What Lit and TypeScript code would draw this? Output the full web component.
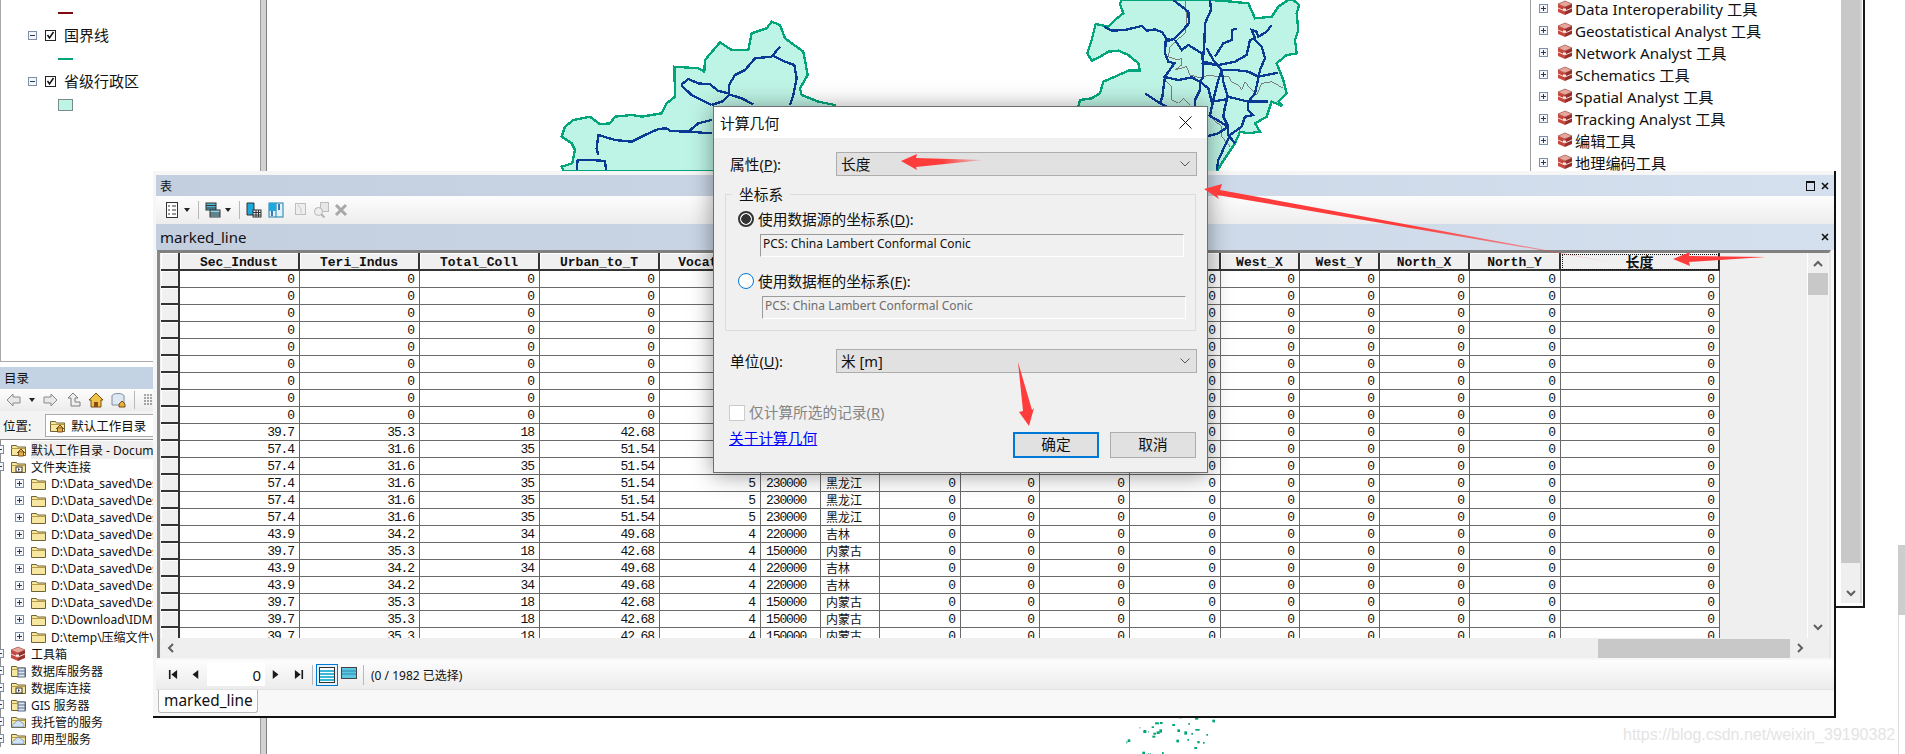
import {LitElement, html, css, svg} from 'lit';
import {customElement} from 'lit/decorators.js';

// map traces, written in the 3x coordinates they were read at
const RIGHT_FILL =
  'M140,0 135,12 145,40 120,60 100,80 62,72 50,120 37,160 50,182 75,170 100,155 130,152 160,165 190,190 195,212 160,212 120,230 85,245 75,280 50,295 15,300 10,320 10,525 420,525 440,490 480,430 495,395 520,400 555,395 540,370 575,350 590,305 622,318 610,305 635,280 625,240 605,190 635,165 665,160 660,120 670,90 665,40 672,15 655,0 640,0 610,20 590,50 540,55 520,10 470,5 408,0 Z';
const RIGHT_ROADS = [
  'M88,80 110,92 150,90 200,78 215,92 240,88 262,97 275,118 295,120',
  'M295,0 340,35 342,70 300,115 272,125 270,160 280,185 298,190 270,230 262,290 255,310',
  'M300,120 320,150 340,135 380,160 385,190 430,195',
  'M405,0 408,30 390,70 388,130 383,190 385,230 375,245 375,270 360,300 360,320',
  'M395,145 415,180 440,210 430,240 415,300 405,345',
  'M420,170 445,130 470,120 472,90 485,85',
  'M385,185 430,195 480,185 515,165 525,120 540,115 530,90 545,95 550,110 575,95 590,75',
  'M540,120 560,140 570,175 555,210 550,235 540,280 520,305 520,330 535,345 510,350 500,380 465,405 430,480 425,510',
  'M440,210 480,210 520,215 550,230 610,218',
  'M440,210 445,245 458,290 450,320 445,350 460,380 460,405 480,430',
  'M265,230 310,240 350,232 375,245 400,265 410,305 455,298',
  'M458,290 500,300 520,305 580,305',
  'M210,280 255,310 275,320',
  'M400,345 435,365 455,378',
  'M400,408 430,400 460,380',
];
const RIGHT_GREY = [
  'M330,0 335,60 330,100 300,125 285,140 280,170 310,180 320,175 320,195 300,210 335,200 345,225 380,235 400,225 430,230 460,228 470,245 490,255 500,270 510,245 525,265 545,285 560,250 590,245 625,265',
  'M270,240 290,260 290,300 310,310 325,295 345,315',
  'M405,350 440,380 440,410 465,440',
];
const LEFT_FILL =
  'M25,465 20,455 52,445 60,405 50,385 20,365 30,335 55,315 105,305 135,328 165,325 180,305 230,300 260,305 320,295 335,265 360,245 358,155 430,160 448,170 450,135 495,82 530,105 580,105 590,55 635,40 650,20 675,30 690,70 745,110 758,180 735,220 740,240 790,260 840,270 840,470 25,470 Z';
const LEFT_ROADS = [
  'M65,465 68,435 110,435 150,438 153,465',
  'M130,420 125,400 130,360 180,375 230,380 270,360 310,342 335,340 345,348 400,350 470,355',
  'M400,350 430,325 470,315',
  'M470,270 505,258 522,240 522,210 540,180 570,165 600,130 650,125 675,95',
  'M650,120 690,140 718,150 725,190 715,240 705,270',
  'M522,238 560,250 595,268',
  'M378,210 400,192 430,205 465,208 490,228 522,235',
  'M378,210 410,240 470,270',
];
const DOTS = [
  [165, 67, 12, 6], [180, 66, 8, 6], [155, 79, 7, 5], [118, 82, 3, 3], [130, 90, 9, 9], [144, 94, 3, 3],
  [160, 98, 8, 6], [170, 94, 9, 8], [178, 88, 8, 10], [157, 107, 9, 6], [217, 72, 8, 6], [232, 88, 8, 8],
  [253, 94, 8, 10], [265, 69, 5, 5], [238, 52, 8, 3], [285, 52, 10, 7], [337, 59, 8, 8], [286, 87, 13, 5],
  [274, 99, 5, 5], [319, 102, 5, 5], [229, 119, 8, 8], [262, 117, 5, 5], [292, 123, 7, 7], [309, 126, 5, 5],
  [283, 141, 8, 6], [83, 118, 8, 8], [79, 124, 3, 6], [127, 155, 8, 8], [186, 156, 5, 6], [144, 160, 3, 3],
  [150, 160, 3, 3],
];

const ZEROS = new Array(9).fill('0');
const SEC = [...ZEROS, '39.7', '57.4', '57.4', '57.4', '57.4', '57.4', '43.9', '39.7', '43.9', '43.9', '39.7', '39.7', '39.7'];
const rowOf = (a: string, b: string, c: string, d: string) => ({a, b, c, d});
const KINDS: Record<string, ReturnType<typeof rowOf>> = {
  '0': rowOf('0', '0', '0', '0'),
  '39.7': rowOf('35.3', '18', '42.68', '4'),
  '57.4': rowOf('31.6', '35', '51.54', '5'),
  '43.9': rowOf('34.2', '34', '49.68', '4'),
};
const PLACE: Record<string, string[]> = {
  '0': ['0', ''],
  '39.7': ['150000', '内蒙古'],
  '57.4': ['230000', '黑龙江'],
  '43.9': ['220000', '吉林'],
};
const HEADS = [
  'Sec_Indust', 'Teri_Indus', 'Total_Coll', 'Urban_to_T', 'Vocation', 'Code', 'Name',
  'East_X', 'East_Y', 'South_X', 'South_Y', 'West_X', 'West_Y', 'North_X', 'North_Y',
];
const TOOLS = [
  'Data Interoperability 工具', 'Geostatistical Analyst 工具', 'Network Analyst 工具', 'Schematics 工具',
  'Spatial Analyst 工具', 'Tracking Analyst 工具', '编辑工具', '地理编码工具',
];
const FOLDERS = [
  ...new Array(8).fill('D:\\Data_saved\\Desktop\\data'),
  'D:\\Download\\IDM\\Compressed',
  'D:\\temp\\压缩文件\\shapefile',
];

const plusBox = svg`<svg class="ico" width="9" height="9" viewBox="0 0 9 9"><rect x=".5" y=".5" width="8" height="8" fill="#f4f6fa" stroke="#7f8ea8"/><path d="M2 4.5h5M4.5 2v5" stroke="#2b3a55"/></svg>`;
const minusBox = svg`<svg class="ico" width="9" height="9" viewBox="0 0 9 9"><rect x=".5" y=".5" width="8" height="8" fill="#f4f6fa" stroke="#7f8ea8"/><path d="M2 4.5h5" stroke="#2b3a55"/></svg>`;
const toolbox = svg`<svg class="ico" width="17" height="16" viewBox="0 0 17 16"><path d="M8 1l7 3-7 3-7-3z" fill="#e9a79b" stroke="#8a3a34" stroke-width=".6"/><path d="M1 4l7 3v8l-7-3z" fill="#c8483f"/><path d="M15 4l-7 3v8l7-3z" fill="#96302c"/><path d="M1 8l7 3 7-3" fill="none" stroke="#f3d6cf"/><rect x="6" y="8.5" width="3" height="2" fill="#eee"/></svg>`;
const folder = (extra: unknown = '') => svg`<svg class="ico" width="17" height="15" viewBox="0 0 17 15"><path d="M1.5 3.5h5l1 1.5h8v8.5h-14z" fill="#f7e6a0" stroke="#6f6234"/><path d="M1.5 6.5h14" stroke="#b69a45"/>${extra}</svg>`;
const house = svg`<path d="M7 11l4-4 4 4M8.5 10v4h5v-4z" fill="#e3b33e" stroke="#7c4b1c"/>`;
const cloud = svg`<path d="M3 13a2.500 2.500 0 0 1 2-4 3.500 3.500 0 0 1 6.500-.5 2.500 2.500 0 0 1 1.500 4.500z" fill="#cfe2f6" stroke="#6c8db3" stroke-width=".7"/>`;
const server = svg`<rect x="8" y="5" width="7" height="9" fill="#dbe6f2" stroke="#5a6c85"/><path d="M8 8h7M8 11h7" stroke="#5a6c85"/>`;
const link = svg`<rect x="6" y="8" width="6" height="5" fill="#fff" stroke="#333"/><path d="M8 9l2 1.500-2 1.500z" fill="#2a2a2a"/>`;
const tbGlyph = (body: unknown, w = 16, h = 16) =>
  svg`<svg class="ico" width=${w} height=${h} viewBox="0 0 16 16">${body}</svg>`;
const arrowDown = svg`<svg class="ico" width="6" height="4" viewBox="0 0 6 4"><path d="M0 0h6L3 4z" fill="#222"/></svg>`;
const navIcon = (d: string) => svg`<svg class="ico nav-ico" width="10" height="9" viewBox="0 0 10 11"><path d=${d} fill="#1a1a1a"/></svg>`;
const chevron = (d: string) => svg`<svg class="ico" width="12" height="12" viewBox="0 0 12 12"><path d=${d} fill="none" stroke="#606060" stroke-width="2"/></svg>`;
const selectChevron = svg`<svg class="ico" width="10" height="6" viewBox="0 0 10 6"><path d="M.5.500l4.500 4.500 4.500-4.500" fill="none" stroke="#555"/></svg>`;
const closeX = svg`<svg class="ico" width="10" height="10" viewBox="0 0 10 10"><path d="M2 2l6 6M8 2l-6 6" stroke="#111" stroke-width="1.600"/></svg>`;

@customElement('app-root')
export class AppRoot extends LitElement {
  static styles = css`
    :host {
      display: block;
      position: relative;
      width: 1905px;
      height: 754px;
      overflow: hidden;
      background: #fff;
      font-family: "Noto Sans", "Noto Sans CJK SC", sans-serif;
      color: #111;
    }

    * {
      box-sizing: border-box;
    }

    .ico {
      display: block;
      flex: none;
    }

    .map,
    .arrows {
      position: absolute;
      left: 0;
      top: 0;
    }

    .arrows {
      pointer-events: none;
    }

    /* layer list */
    .toc {
      position: absolute;
      left: 0;
      top: 0;
      width: 260px;
      height: 362px;
      padding-top: 1px;
      border-left: 1px solid #a8a8a8;
      background: #fff;
      font-size: 15px;
    }

    .toc-row {
      display: flex;
      align-items: center;
      height: 23px;
      padding-left: 27px;
    }

    .toc-row span {
      margin-top: -2px;
    }

    .toc-check {
      margin-left: 8px;
      margin-right: 8px;
    }

    .legend-line {
      width: 15px;
      height: 2px;
      margin-left: 30px;
    }

    .legend-line.red {
      background: #7d0b14;
    }

    .legend-line.green {
      background: #00a57a;
    }

    .legend-fill {
      width: 15px;
      height: 12px;
      margin-left: 30px;
      background: #bef4e5;
      border: 1px solid #7c8c88;
    }

    .splitter {
      position: absolute;
      left: 260px;
      top: 0;
      width: 7px;
      height: 754px;
      background: #d2d2d2;
      border-left: 1px solid #9a9a9a;
      border-right: 1px solid #808080;
    }

    /* catalog */
    .catalog {
      position: absolute;
      left: 0;
      top: 361px;
      width: 258px;
      height: 393px;
      background: #fff;
      border-top: 1px solid #aaa;
      overflow: hidden;
      font-size: 12px;
    }

    .cat-title {
      margin-top: 5px;
      height: 22px;
      padding-left: 4px;
      line-height: 23px;
      font-size: 12.500px;
      background: #c4d3e4;
    }

    .cat-tools {
      display: flex;
      align-items: center;
      gap: 7px;
      height: 22px;
      padding-left: 6px;
      background: linear-gradient(#fdfdfd, #ececec);
    }

    .tool-sep {
      width: 1px;
      height: 18px;
      background: #b8b8b8;
    }

    .cat-where {
      display: flex;
      align-items: center;
      height: 28px;
      font-size: 12.500px;
      padding-left: 3px;
      background: #f3f3f3;
    }

    .where-box {
      display: flex;
      align-items: center;
      gap: 5px;
      width: 204px;
      height: 23px;
      margin-left: 14px;
      padding-left: 3px;
      background: #fff;
      border: 1px solid #ababab;
    }

    .cat-tree {
      padding-top: 1px;
      border-top: 1px solid #8f8f8f;
      border-left: 1px solid #8f8f8f;
    }

    .tree-row {
      display: flex;
      align-items: center;
      height: 17px;
      white-space: nowrap;
    }

    .tree-row .exp {
      margin-left: -6px;
      margin-right: 6px;
    }

    .tree-row .text {
      margin-left: 4px;
      padding-right: 4px;
    }

    .tree-row.sel .text {
      background: #efefef;
    }

    .tree-row.child {
      padding-left: 14px;
    }

    .tree-row.child .ico:first-child {
      margin-right: 6px;
    }

    /* toolbox dock behind the table */
    .toolbox {
      position: absolute;
      left: 1530px;
      top: 0;
      width: 335px;
      height: 608px;
      background: #fff;
      border-left: 1px solid #a0a0a0;
      border-right: 2px solid #1a1a1a;
      border-bottom: 2px solid #1a1a1a;
      overflow: hidden;
      font-size: 15.200px;
    }

    .tool-list {
      margin-top: -3px;
    }

    .tool-row {
      display: flex;
      align-items: center;
      height: 22px;
      padding-left: 8px;
      white-space: nowrap;
    }

    .tool-row .ico:first-child {
      margin-right: 9px;
    }

    .tool-row span {
      margin-left: 1px;
    }

    .dock-track {
      position: absolute;
      right: 1px;
      top: 0;
      width: 21px;
      height: 603px;
      background: #efefef;
      border-right: 2px solid #d6d6d6;
    }

    .dock-thumb {
      height: 563px;
      background: #c8c8c8;
    }

    .dock-chev {
      display: flex;
      justify-content: center;
      margin-top: 24px;
    }

    .page-thumb {
      position: absolute;
      left: 1898px;
      top: 545px;
      width: 7px;
      height: 70px;
      background: #cdcdcd;
    }

    .page-track {
      position: absolute;
      left: 1898px;
      top: 615px;
      width: 1px;
      height: 139px;
      background: #dcdcdc;
    }

    /* table window */
    .table-win {
      position: absolute;
      left: 153px;
      top: 171px;
      width: 1683px;
      height: 547px;
      padding: 4px 0 0 3px;
      background: #f6f6f6;
      border-right: 2px solid #111;
      border-bottom: 2px solid #111;
      display: flex;
      flex-direction: column;
    }

    .win-title {
      display: flex;
      align-items: center;
      justify-content: space-between;
      flex: none;
      height: 21px;
      padding: 0 4px;
      font-size: 12px;
      background: linear-gradient(to right, #c3cfde, #d4e0ee);
    }

    .win-btns {
      display: flex;
      align-items: center;
      gap: 5px;
    }

    .win-max {
      width: 9px;
      height: 10px;
      border: 1px solid #111;
      border-top-width: 2px;
    }

    .win-tools {
      display: flex;
      align-items: center;
      flex: none;
      height: 28px;
      padding-left: 8px;
      background: linear-gradient(#fdfdfd, #ededed);
    }

    .win-tools .tool-sep {
      margin: 0 6px 0 8px;
    }

    .gap4 {
      width: 4px;
    }

    .gap6 {
      width: 6px;
    }

    .gap9 {
      width: 9px;
    }

    .win-band {
      display: flex;
      align-items: center;
      justify-content: space-between;
      flex: none;
      height: 26px;
      padding: 0 4px;
      font-size: 15px;
      background: linear-gradient(to right, #c3cfde, #d4e0ee);
    }

    .content {
      flex: none;
      width: 1674px;
      height: 408px;
      margin-left: 1px;
      border-top: 3px solid #808080;
      border-left: 3px solid #8a8a8a;
      border-right: 2px solid #e6e6e6;
      display: flex;
      flex-direction: column;
    }

    .main {
      display: flex;
      height: 385px;
      flex: none;
    }

    .viewport {
      width: 1648px;
      height: 385px;
      padding-left: 1px;
      overflow: hidden;
      background: #efefef;
      border-right: 1px solid #fff;
    }

    .row {
      display: grid;
      grid-template-columns: 19px 120px 120px 120px 120px 101px 60px 59px 81px 79px 90px 91px 79px 80px 90px 91px 159px;
      width: 1559px;
      height: 17px;
      font-family: "Liberation Mono", "Noto Sans CJK SC", monospace;
    }

    .row.head {
      height: 18px;
      font-size: 13px;
      font-weight: 700;
    }

    .head > div {
      text-align: center;
      line-height: 19px;
      background: #f0f0f0;
      box-shadow: inset 1px 1px #fff;
      border-right: 2px solid #333;
      border-bottom: 2px solid #333;
      overflow: hidden;
      white-space: nowrap;
    }

    .head > .focus {
      outline: 1px dotted #111;
      outline-offset: -2px;
      font-family: "Noto Sans CJK SC", sans-serif;
      font-size: 14px;
      line-height: 16px;
    }

    .cell {
      background: #fff;
      border-right: 1px solid #6a6a6a;
      border-bottom: 1px solid #6a6a6a;
      padding-right: 5px;
      text-align: right;
      font-size: 13px;
      letter-spacing: -1.100px;
      line-height: 18px;
      white-space: nowrap;
      overflow: hidden;
    }

    .cell.code {
      text-align: left;
      padding-left: 5px;
    }

    .cell.txt {
      text-align: left;
      padding-left: 5px;
      font-family: "Noto Sans CJK SC", sans-serif;
      font-size: 12px;
      line-height: 16px;
      letter-spacing: 0;
    }

    .cell.hd {
      background: #f0f0f0;
      box-shadow: inset 1px 1px #fff;
      border-right: 2px solid #333;
      border-bottom: 2px solid #333;
      padding: 0;
    }

    .vscroll {
      display: flex;
      flex-direction: column;
      align-items: center;
      width: 20px;
      height: 385px;
      background: #efefef;
      padding-top: 5px;
    }

    .vscroll .thumb {
      width: 100%;
      height: 22px;
      margin-top: 3px;
      background: #c8c8c8;
    }

    .vscroll .down {
      margin-top: 326px;
    }

    .hscroll {
      display: flex;
      align-items: center;
      flex: none;
      height: 20px;
      padding-left: 5px;
      background: #efefef;
    }

    .hscroll .thumb {
      width: 192px;
      height: 19px;
      margin-left: 1421px;
      background: #c8c8c8;
    }

    .hscroll .right {
      margin-left: 4px;
    }

    .nav {
      display: flex;
      align-items: center;
      flex: none;
      height: 29px;
      margin-top: 2px;
      padding-left: 12px;
      font-size: 12px;
      background: linear-gradient(#fdfdfd, #ececec);
    }

    .nav-ico + .nav-ico {
      margin-left: 12px;
    }

    .rec-input {
      width: 58px;
      height: 23px;
      margin: 0 6px 0 7px;
      padding-right: 4px;
      text-align: right;
      font-size: 15px;
      line-height: 24px;
      background: #fff;
    }

    .rec-next {
      margin-left: 13px;
    }

    .nav .tool-sep {
      margin-left: 8px;
      height: 20px;
    }

    .rec-btn {
      display: flex;
      align-items: center;
      justify-content: center;
      width: 22px;
      height: 22px;
      margin-left: 3px;
      background: #e5f1fb;
      border: 1px solid #0078d7;
    }

    .rec-alt {
      margin: -4px 0 0 3px;
    }

    .nav .sep2 {
      margin-left: 6px;
    }

    .nav-text {
      margin-left: 7px;
    }

    .tabs {
      flex: 1;
      padding-left: 2px;
      background: #f8f8f8;
      border-top: 1px solid #e2e2e2;
    }

    .tab {
      width: 100px;
      height: 23px;
      line-height: 22px;
      padding-left: 5px;
      font-size: 15.400px;
      background: #fff;
      border: 1px solid #b8b8b8;
      border-top: none;
      border-radius: 0 0 3px 3px;
    }

    /* calculate geometry dialog */
    .dialog {
      position: absolute;
      left: 713px;
      top: 106px;
      width: 495px;
      height: 367px;
      border: 1px solid #6f6f6f;
      background: #f0f0f0;
      font-size: 14.700px;
      box-shadow: 0 2px 22px rgba(0, 0, 0, 0.4);
    }

    .dlg-title {
      display: flex;
      align-items: center;
      justify-content: space-between;
      height: 31px;
      padding: 0 15px 0 6px;
      background: #fff;
      font-size: 14.800px;
    }

    .field {
      display: flex;
      align-items: center;
      height: 24px;
    }

    .first {
      margin-top: 14px;
    }

    .field label {
      width: 122px;
      padding-left: 16px;
      margin-top: -2px;
    }

    .ul {
      text-decoration: underline;
    }

    .select {
      display: flex;
      align-items: center;
      justify-content: space-between;
      width: 361px;
      height: 24px;
      padding: 0 6px 0 4px;
      background: #e1e1e1;
      border: 1px solid #adadad;
    }

    .select span {
      margin-top: -2px;
    }

    .group {
      position: relative;
      width: 471px;
      height: 137px;
      margin: 18px 0 18px 11px;
      padding-left: 12px;
      border: 1px solid #dcdcdc;
    }

    .group-name {
      position: absolute;
      left: 6px;
      top: -11px;
      padding: 0 7px;
      line-height: 20px;
      background: #f0f0f0;
    }

    .radio-row {
      display: flex;
      align-items: center;
      gap: 4px;
      height: 20px;
      margin-top: 14px;
    }

    .radio-row > span {
      margin-top: -2px;
    }

    .radio {
      width: 16px;
      height: 16px;
      border-radius: 50%;
      background: #fff;
      border: 1px solid #0078d7;
    }

    .radio.on {
      border: 2px solid #333;
      background: radial-gradient(circle, #333 0 4.500px, #fff 5px);
    }

    .ro-box {
      width: 424px;
      height: 23px;
      margin: 5px 0 0 22px;
      padding-left: 2px;
      font-size: 12px;
      line-height: 17px;
      border-top: 1px solid #9b9b9b;
      border-left: 1px solid #9b9b9b;
      border-bottom: 1px solid #fff;
      border-right: 1px solid #fff;
    }

    .ro-box.off {
      margin-left: 24px;
      color: #6d6d6d;
    }

    .check-row {
      display: flex;
      align-items: center;
      gap: 4px;
      height: 16px;
      margin: 32px 0 0 15px;
      color: #858585;
    }

    .check-row > span {
      margin-top: -3px;
    }

    .check-box {
      width: 16px;
      height: 16px;
      background: #fff;
      border: 1px solid #cccccc;
    }

    .dlg-foot {
      display: flex;
      margin: 11px 0 0 15px;
      height: 26px;
    }

    .about {
      margin-top: -4px;
      height: 20px;
      line-height: 20px;
      color: #0000ff;
      text-decoration: underline;
      width: 284px;
    }

    .btn {
      width: 86px;
      height: 26px;
      text-align: center;
      line-height: 23px;
      background: #e1e1e1;
      border: 1px solid #adadad;
    }

    .btn.def {
      border: 2px solid #0078d7;
      margin-right: 11px;
      line-height: 21px;
    }

    .watermark {
      position: absolute;
      left: 1623px;
      top: 725px;
      font-family: "Liberation Sans", sans-serif;
      font-size: 16px;
      line-height: 20px;
      color: #e4e4e4;
      white-space: nowrap;
    }
  `;

  private renderMap() {
    return svg`<svg class="map" width="1905" height="754" viewBox="0 0 1905 754">
      <g transform="translate(1075 0) scale(.33333)" shape-rendering="crispEdges" fill="none">
        <path d=${RIGHT_FILL} fill="#bef4e5" stroke="#00a57a" stroke-width="7"/>
        ${RIGHT_GREY.map((d) => svg`<path d=${d} stroke="#7b7b7b" stroke-width="3"/>`)}
        ${RIGHT_ROADS.map((d) => svg`<path d=${d} stroke="#0b3a94" stroke-width="7"/>`)}
      </g>
      <g transform="translate(555 15) scale(.33333)" shape-rendering="crispEdges" fill="none">
        <path d=${LEFT_FILL} fill="#bef4e5" stroke="#00a57a" stroke-width="7"/>
        ${LEFT_ROADS.map((d) => svg`<path d=${d} stroke="#0b3a94" stroke-width="7"/>`)}
      </g>
      <g transform="translate(1100 700) scale(.33333)" fill="#00a57a">
        ${DOTS.map(([x, y, w, h]) => svg`<rect x=${x} y=${y} width=${w} height=${h}/>`)}
      </g>
    </svg>`;
  }

  private renderToc() {
    const check = svg`<svg class="ico toc-check" width="11" height="11" viewBox="0 0 11 11"><rect x=".5" y=".5" width="10" height="10" fill="#fff" stroke="#222"/><path d="M2.500 5l2 3 4-6" fill="none" stroke="#111" stroke-width="1.500"/></svg>`;
    return html`<div class="toc">
      <div class="toc-row"><div class="legend-line red"></div></div>
      <div class="toc-row">${minusBox}${check}<span>国界线</span></div>
      <div class="toc-row"><div class="legend-line green"></div></div>
      <div class="toc-row">${minusBox}${check}<span>省级行政区</span></div>
      <div class="toc-row"><div class="legend-fill"></div></div>
    </div>`;
  }

  private renderCatalog() {
    const top = (icon: unknown, label: string, cls = '') => html`<div class="tree-row ${cls}">
      <span class="exp">${plusBox}</span>${icon}<span class="text">${label}</span>
    </div>`;
    return html`<div class="catalog">
      <div class="cat-title">目录</div>
      <div class="cat-tools">
        ${tbGlyph(svg`<path d="M1 8l6-6v3h7v6H7v3z" fill="#e8e8e8" stroke="#8a8a8a"/>`)}
        ${arrowDown}
        ${tbGlyph(svg`<path d="M15 8L9 2v3H2v6h7v3z" fill="#e8e8e8" stroke="#8a8a8a"/>`)}
        ${tbGlyph(svg`<path d="M8 1l5 5h-3v4h5v4H6V6H3z" fill="#eee" stroke="#7c7c7c"/>`)}
        ${tbGlyph(svg`<path d="M8 1l7 7h-2v7H3V8H1z" fill="#f0c24a" stroke="#7b4a12"/><rect x="6" y="10" width="4" height="5" fill="#8a4c16"/>`)}
        ${tbGlyph(svg`<ellipse cx="7" cy="4" rx="6" ry="2.500" fill="#dfe8f2" stroke="#7c8fa6"/><path d="M1 4v9h12V4" fill="#dfe8f2" stroke="#7c8fa6"/><path d="M8 12l3-3 3 3v3H8z" fill="#e3b33e" stroke="#7c4b1c"/>`)}
        <div class="tool-sep"></div>
        ${tbGlyph(svg`<path d="M2 3h12M2 6h12M2 9h12M2 12h12" stroke="#555" stroke-dasharray="2 1"/>`)}
      </div>
      <div class="cat-where">
        <span>位置:</span>
        <div class="where-box">${folder(house)}<span>默认工作目录</span></div>
      </div>
      <div class="cat-tree">
        ${top(folder(house), '默认工作目录 - Documents\\ArcGIS', 'sel')}
        ${top(folder(link), '文件夹连接')}
        ${FOLDERS.map(
          (f) => html`<div class="tree-row child">${plusBox}${folder()}<span class="text">${f}</span></div>`
        )}
        ${top(toolbox, '工具箱')}
        ${top(folder(server), '数据库服务器')}
        ${top(folder(link), '数据库连接')}
        ${top(folder(server), 'GIS 服务器')}
        ${top(folder(cloud), '我托管的服务')}
        ${top(folder(cloud), '即用型服务')}
      </div>
    </div>`;
  }

  private renderToolbox() {
    return html`<div class="toolbox">
      <div class="tool-list">
        ${TOOLS.map((t) => html`<div class="tool-row">${plusBox}${toolbox}<span>${t}</span></div>`)}
      </div>
      <div class="dock-track">
        <div class="dock-thumb"></div>
        <div class="dock-chev">${chevron('M2 4l4 4 4-4')}</div>
      </div>
    </div>`;
  }

  private renderGrid() {
    return html`<div class="viewport">
      <div class="row head">
        <div></div>
        ${HEADS.map((h) => html`<div>${h}</div>`)}
        <div class="focus">长度</div>
      </div>
      ${SEC.map((s) => {
        const k = KINDS[s];
        const p = PLACE[s];
        const vals = [s, k.a, k.b, k.c, k.d];
        return html`<div class="row">
          <div class="cell hd"></div>
          ${vals.map((v) => html`<div class="cell">${v}</div>`)}
          <div class="cell code">${p[0]}</div>
          <div class="cell txt">${p[1]}</div>
          ${new Array(9).fill('0').map((v) => html`<div class="cell">${v}</div>`)}
        </div>`;
      })}
    </div>`;
  }

  private renderTableWin() {
    const stripes = svg`<rect x=".5" y=".5" width="15" height="15" fill="#fff" stroke="#333"/><path d="M1 4h14M1 7h14M1 10h14M1 13h14" stroke="#39b8d8" stroke-width="2"/>`;
    return html`<div class="table-win">
      <div class="win-title">
        <span>表</span>
        <div class="win-btns"><div class="win-max"></div>${closeX}</div>
      </div>
      <div class="win-tools">
        ${tbGlyph(svg`<rect x="2.500" y=".5" width="11" height="15" fill="#fff" stroke="#333"/><path d="M4 4h2M4 8h2M4 12h2M8 4h4M8 8h4M8 12h4" stroke="#333"/>`)}
        <span class="gap4"></span>${arrowDown}
        <div class="tool-sep"></div>
        ${tbGlyph(svg`<rect x="1" y="1" width="10" height="7" fill="#55b9d6" stroke="#333"/><rect x="5" y="8" width="10" height="7" fill="#8fd4e6" stroke="#333"/><path d="M1 3.500h10M1 6h10M5 11h10M5 13h10" stroke="#333"/>`)}
        <span class="gap4"></span>${arrowDown}
        <div class="tool-sep"></div>
        ${tbGlyph(svg`<path d="M1 1h7v12H1z" fill="#1fa8dc" stroke="#333"/><rect x="7" y="8" width="8" height="7" fill="#eee" stroke="#333"/><path d="M7 10.500h8M7 13h8M10 8v7M12.500 8v7" stroke="#333"/>`)}
        <span class="gap6"></span>
        ${tbGlyph(svg`<rect x="1" y="1" width="14" height="14" fill="#dff3fb" stroke="#1d7fa8"/><path d="M8 1v14" stroke="#1d7fa8"/><path d="M1 1h7v8H1z" fill="#1fa8dc"/><path d="M4 14V9M11 2v6" stroke="#134c9c" stroke-width="1.500"/>`)}
        <span class="gap9"></span>
        ${tbGlyph(svg`<rect x="2.500" y="1.500" width="10" height="11" fill="#eee" stroke="#bdbdbd"/><path d="M5 3l3 4v4" fill="none" stroke="#c8c8c8"/>`)}
        <span class="gap4"></span>
        ${tbGlyph(svg`<rect x="7.500" y=".5" width="8" height="9" fill="#e6e6e6" stroke="#bcbcbc"/><circle cx="5.500" cy="9.500" r="4" fill="#eee" stroke="#b4b4b4"/><path d="M8.500 12.500l3 3" stroke="#b4b4b4" stroke-width="2"/>`)}
        <span class="gap4"></span>
        ${tbGlyph(svg`<path d="M3 3l10 10M13 3L3 13" stroke="#a8a8a8" stroke-width="3"/>`)}
      </div>
      <div class="win-band"><span>marked_line</span>${closeX}</div>
      <div class="content">
        <div class="main">
          ${this.renderGrid()}
          <div class="vscroll">
            ${chevron('M2 8l4-4 4 4')}
            <div class="thumb"></div>
            <div class="down">${chevron('M2 4l4 4 4-4')}</div>
          </div>
        </div>
        <div class="hscroll">
          ${chevron('M8 2L4 6l4 4')}
          <div class="thumb"></div>
          <div class="right">${chevron('M4 2l4 4-4 4')}</div>
        </div>
      </div>
      <div class="nav">
        ${navIcon('M0 0h2v11H0zM10 0v11L3 5.500z')}
        ${navIcon('M9 0v11L2 5.500z')}
        <div class="rec-input">0</div>
        ${navIcon('M1 0v11l7-5.500z')}
        <div class="rec-next">${navIcon('M0 0v11l7-5.500zM8 0h2v11H8z')}</div>
        <div class="tool-sep"></div>
        <div class="rec-btn">${tbGlyph(stripes)}</div>
        <div class="rec-alt">${tbGlyph(svg`<rect x=".5" y="2.500" width="15" height="11" fill="#5dc6e2" stroke="#444"/><path d="M1 6h14M1 9h14" stroke="#2a8aa8"/>`)}</div>
        <div class="tool-sep sep2"></div>
        <span class="nav-text">(0 / 1982 已选择)</span>
      </div>
      <div class="tabs"><div class="tab">marked_line</div></div>
    </div>`;
  }

  private renderDialog() {
    return html`<div class="dialog">
      <div class="dlg-title">
        <span>计算几何</span>
        <svg class="ico" width="13" height="13" viewBox="0 0 13 13"><path d="M.5.500l12 12M12.500.500l-12 12" stroke="#111" fill="none"/></svg>
      </div>
      <div class="field first">
        <label>属性(<span class="ul">P</span>):</label>
        <div class="select"><span>长度</span>${selectChevron}</div>
      </div>
      <div class="group">
        <span class="group-name">坐标系</span>
        <div class="radio-row"><div class="radio on"></div><span>使用数据源的坐标系(<span class="ul">D</span>):</span></div>
        <div class="ro-box">PCS: China Lambert Conformal Conic</div>
        <div class="radio-row"><div class="radio"></div><span>使用数据框的坐标系(<span class="ul">F</span>):</span></div>
        <div class="ro-box off">PCS: China Lambert Conformal Conic</div>
      </div>
      <div class="field">
        <label>单位(<span class="ul">U</span>):</label>
        <div class="select"><span>米 [m]</span>${selectChevron}</div>
      </div>
      <div class="check-row"><div class="check-box"></div><span>仅计算所选的记录(<span class="ul">R</span>)</span></div>
      <div class="dlg-foot">
        <div class="about">关于计算几何</div>
        <div class="btn def">确定</div>
        <div class="btn">取消</div>
      </div>
    </div>`;
  }

  private renderArrows() {
    const red = '#ff3c3c';
    return svg`<svg class="arrows" width="1905" height="754" viewBox="0 0 1905 754">
      <defs>
        <linearGradient id="fadeR" x1="0" x2="1" y1="0" y2="0">
          <stop offset="0.5" stop-color=${red}/><stop offset="1" stop-color=${red} stop-opacity=".15"/>
        </linearGradient>
      </defs>
      <path d="M901 161 917 154 916 158 984 160 916 167 917 170Z" fill="url(#fadeR)"/>
      <path d="M1204 189 1222 184 1220 190 1616 263 1217 195 1219 199Z" fill="url(#fadeR)"/>
      <path d="M1673 259 1690 252 1689 256 1766 257 1689 262 1690 266Z" fill=${red}/>
      <path d="M1018 362 1032 410 1034 408 1029 426 1019 412 1023 411Z" fill=${red}/>
    </svg>`;
  }

  render() {
    return html`
      ${this.renderMap()}
      ${this.renderToc()}
      <div class="splitter"></div>
      ${this.renderCatalog()}
      ${this.renderToolbox()}
      <div class="page-thumb"></div>
      <div class="page-track"></div>
      ${this.renderTableWin()}
      ${this.renderDialog()}
      ${this.renderArrows()}
      <div class="watermark">https://blog.csdn.net/weixin_39190382</div>
    `;
  }
}
